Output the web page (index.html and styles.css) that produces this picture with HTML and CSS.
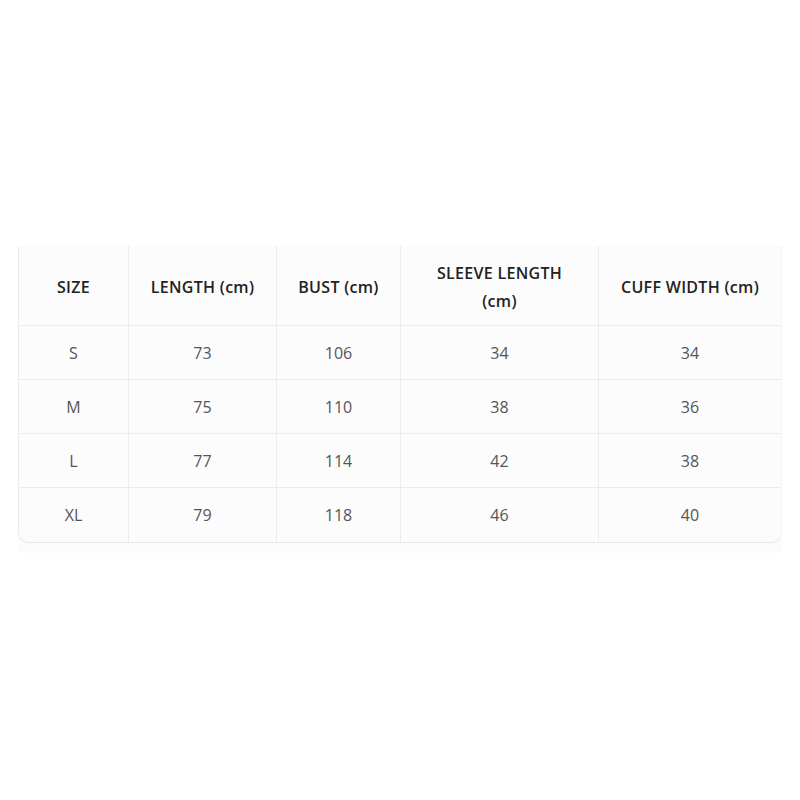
FILE: index.html
```html
<!DOCTYPE html>
<html>
<head>
<meta charset="utf-8">
<link rel="stylesheet" href="styles.css">
</head>
<body>
<div class="page">
  <div class="wrap">
    <table class="sizes">
      <colgroup>
        <col class="c1"><col class="c2"><col class="c3"><col class="c4"><col class="c5">
      </colgroup>
      <thead>
        <tr><th>SIZE</th><th>LENGTH (cm)</th><th>BUST (cm)</th><th>SLEEVE LENGTH<br>(cm)</th><th>CUFF WIDTH (cm)</th></tr>
      </thead>
      <tbody>
        <tr><td>S</td><td>73</td><td>106</td><td>34</td><td>34</td></tr>
        <tr><td>M</td><td>75</td><td>110</td><td>38</td><td>36</td></tr>
        <tr><td>L</td><td>77</td><td>114</td><td>42</td><td>38</td></tr>
        <tr><td>XL</td><td>79</td><td>118</td><td>46</td><td>40</td></tr>
      </tbody>
    </table>
  </div>
</div>
</body>
</html>
```
FILE: styles.css
```css
html, body { margin: 0; padding: 0; background: #ffffff; }
body { font-family: "Open Sans", "Noto Sans", sans-serif; }
.page { padding: 246px 18px 0 18px; }
.wrap { background: #fcfcfc; padding-bottom: 10px; }
.sizes {
  width: 100%;
  border-collapse: separate;
  border-spacing: 0;
  table-layout: fixed;
  border-left: 1px solid #ececec;
  border-bottom: 1px solid #e6e6e6;
  border-right: 1px solid #f4f4f4;
  border-radius: 0 0 10px 10px;
  background: #fcfcfc;
}
.c1 { width: 110px; } .c2 { width: 148px; } .c3 { width: 124px; } .c4 { width: 198px; } .c5 { width: auto; }
.sizes th, .sizes td {
  text-align: center;
  font-size: 16px;
  border-right: 1px solid #ececec;
  border-bottom: 1px solid #ececec;
}
.sizes th { padding: 13px 6px 10px; line-height: 28px; font-weight: 600; color: #222; letter-spacing: 0.3px; }
.sizes td { padding: 14px 6px 12px; line-height: 27px; font-weight: 400; color: #555; }
.sizes tbody tr:last-child td { padding-bottom: 13px; }
.sizes th:last-child, .sizes td:last-child { border-right: none; }
.sizes tbody tr:last-child td { border-bottom: none; }
```
